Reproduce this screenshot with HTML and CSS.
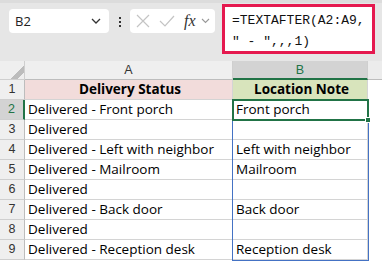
FILE: index.html
```html
<!DOCTYPE html>
<html lang="en">
<head>
    <meta charset="UTF-8">
    <title>TEXTAFTER</title>
    <link rel="stylesheet" href="styles.css">
</head>
<body>
    <div class="toolbar">
        <div class="name-box">
            <span>B2</span>
            <svg width="10" height="6" viewBox="0 0 10 6"><path d="M1 1 L5 5 L9 1" fill="none" stroke="#333" stroke-width="1.3"/></svg>
        </div>
        <div class="grip"><i></i><i></i><i></i></div>
        <div class="fx-box">
            <svg width="14" height="14" viewBox="0 0 14 14"><path d="M1 1 L13 13 M13 1 L1 13" stroke="#c4c4c4" stroke-width="1.2"/></svg>
            <svg width="16" height="12" viewBox="0 0 16 12"><path d="M1 6 L6 11 L15 1" fill="none" stroke="#c4c4c4" stroke-width="1.2"/></svg>
            <span class="fx">fx</span>
            <svg width="9" height="6" viewBox="0 0 9 6"><path d="M1 1 L4.5 4.5 L8 1" fill="none" stroke="#999" stroke-width="1.1"/></svg>
        </div>
        <div class="formula">=TEXTAFTER(A2:A9,<br>" - ",,,1)</div>
    </div>

    <div class="sheet">
        <div class="corner"></div>
        <div class="col-head">A</div>
        <div class="col-head active">B</div>
        <div class="col-head rest"></div>

        <div class="row-head">1</div>
        <div class="cell title status">Delivery Status</div>
        <div class="cell title note">Location Note</div>
        <div class="cell rest"></div>

        <div class="row-head active">2</div>
        <div class="cell">Delivered - Front porch</div>
        <div class="cell">Front porch</div>
        <div class="cell rest"></div>

        <div class="row-head">3</div>
        <div class="cell">Delivered</div>
        <div class="cell"></div>
        <div class="cell rest"></div>

        <div class="row-head">4</div>
        <div class="cell">Delivered - Left with neighbor</div>
        <div class="cell">Left with neighbor</div>
        <div class="cell rest"></div>

        <div class="row-head">5</div>
        <div class="cell">Delivered - Mailroom</div>
        <div class="cell">Mailroom</div>
        <div class="cell rest"></div>

        <div class="row-head">6</div>
        <div class="cell">Delivered</div>
        <div class="cell"></div>
        <div class="cell rest"></div>

        <div class="row-head">7</div>
        <div class="cell">Delivered - Back door</div>
        <div class="cell">Back door</div>
        <div class="cell rest"></div>

        <div class="row-head">8</div>
        <div class="cell">Delivered</div>
        <div class="cell"></div>
        <div class="cell rest"></div>

        <div class="row-head">9</div>
        <div class="cell">Delivered - Reception desk</div>
        <div class="cell">Reception desk</div>
        <div class="cell rest"></div>

        <!-- spill range and active cell -->
        <div class="spill"></div>
        <div class="selection"><span class="handle"></span></div>
    </div>
</body>
</html>
```

FILE: styles.css
```css
* {
    box-sizing: border-box;
}

body {
    margin: 0;
    background: #e6e6e6;
    font-family: "Open Sans", "Liberation Sans", sans-serif;
    overflow: hidden;
}

.toolbar {
    height: 61px;
    display: flex;
    align-items: flex-start;
    border-top: 3px solid #dcdcdc;
    padding-top: 1px;
}

.name-box {
    margin: 5px 0 0 9px;
    width: 100px;
    height: 24px;
    background: #fff;
    border-radius: 4px;
    display: flex;
    align-items: center;
    justify-content: space-between;
    padding: 0 8px 0 6px;
    font-size: 13px;
    color: #222;
}

.grip {
    width: 21px;
    margin-top: 13px;
    display: flex;
    flex-direction: column;
    align-items: center;
    gap: 2px;
}

.grip i {
    width: 2px;
    height: 2px;
    background: #333;
}

.fx-box {
    margin-top: 5px;
    width: 85px;
    height: 24px;
    background: #fff;
    border-radius: 4px;
    display: flex;
    align-items: center;
    gap: 9px;
    padding-left: 6px;
}

.fx {
    font-family: "Liberation Serif", serif;
    font-style: italic;
    font-size: 16px;
    color: #333;
    margin-right: -4px;
}

.formula {
    margin-left: 7px;
    width: 153px;
    height: 50px;
    background: #fff;
    border: 3px solid #e5194f;
    padding: 3px 0 0 7px;
    font-family: "Liberation Mono", monospace;
    font-size: 13px;
    line-height: 21px;
    color: #111;
    white-space: nowrap;
}

.sheet {
    position: relative;
    display: grid;
    grid-template-columns: 25px 208px 135px 1fr;
    grid-template-rows: 19px repeat(9, 20px) 1fr;
    height: 203px;
    background: #fff;
}

.corner {
    background: #efefef linear-gradient(135deg, transparent 68%, #bcbcbc 68%, #bcbcbc 84%, transparent 84%);
    border-right: 1px solid #cfcfcf;
    border-bottom: 1px solid #cfcfcf;
}

.col-head {
    background: #efefef;
    border-right: 1px solid #cfcfcf;
    border-bottom: 1px solid #bdbdbd;
    font-family: "Liberation Sans", sans-serif;
    font-size: 12.5px;
    color: #333;
    text-align: center;
    line-height: 18px;
}

.col-head.active {
    background: #d3d3d3;
    color: #217346;
    border-bottom: 2px solid #217346;
}

.col-head.rest {
    background: #ececec;
    border-right: none;
}

.row-head {
    background: #efefef;
    border-right: 1px solid #bdbdbd;
    border-bottom: 1px solid #cfcfcf;
    font-family: "Liberation Sans", sans-serif;
    font-size: 12.5px;
    color: #333;
    text-align: center;
    line-height: 19px;
}

.row-head.active {
    background: #d3d3d3;
    color: #217346;
    border-right: 2px solid #217346;
}

.cell {
    border-right: 1px solid #d4d4d4;
    border-bottom: 1px solid #d4d4d4;
    font-size: 13.5px;
    color: #000;
    padding-left: 3px;
    line-height: 19px;
    white-space: nowrap;
}

.cell.rest {
    border-right: none;
    border-bottom: none;
}

.title {
    font-weight: 700;
    text-align: center;
}

.status {
    background: #f2dcdb;
}

.note {
    background: #d8e4bc;
}

.spill {
    position: absolute;
    left: 232px;
    top: 58px;
    width: 137px;
    height: 142px;
    border: 1px solid #4472c4;
}

.selection {
    position: absolute;
    left: 232px;
    top: 38px;
    width: 137px;
    height: 22px;
    border: 2px solid #217346;
}

.handle {
    position: absolute;
    right: -4px;
    bottom: -4px;
    width: 6px;
    height: 6px;
    background: #217346;
    border: 1px solid #fff;
}
```
